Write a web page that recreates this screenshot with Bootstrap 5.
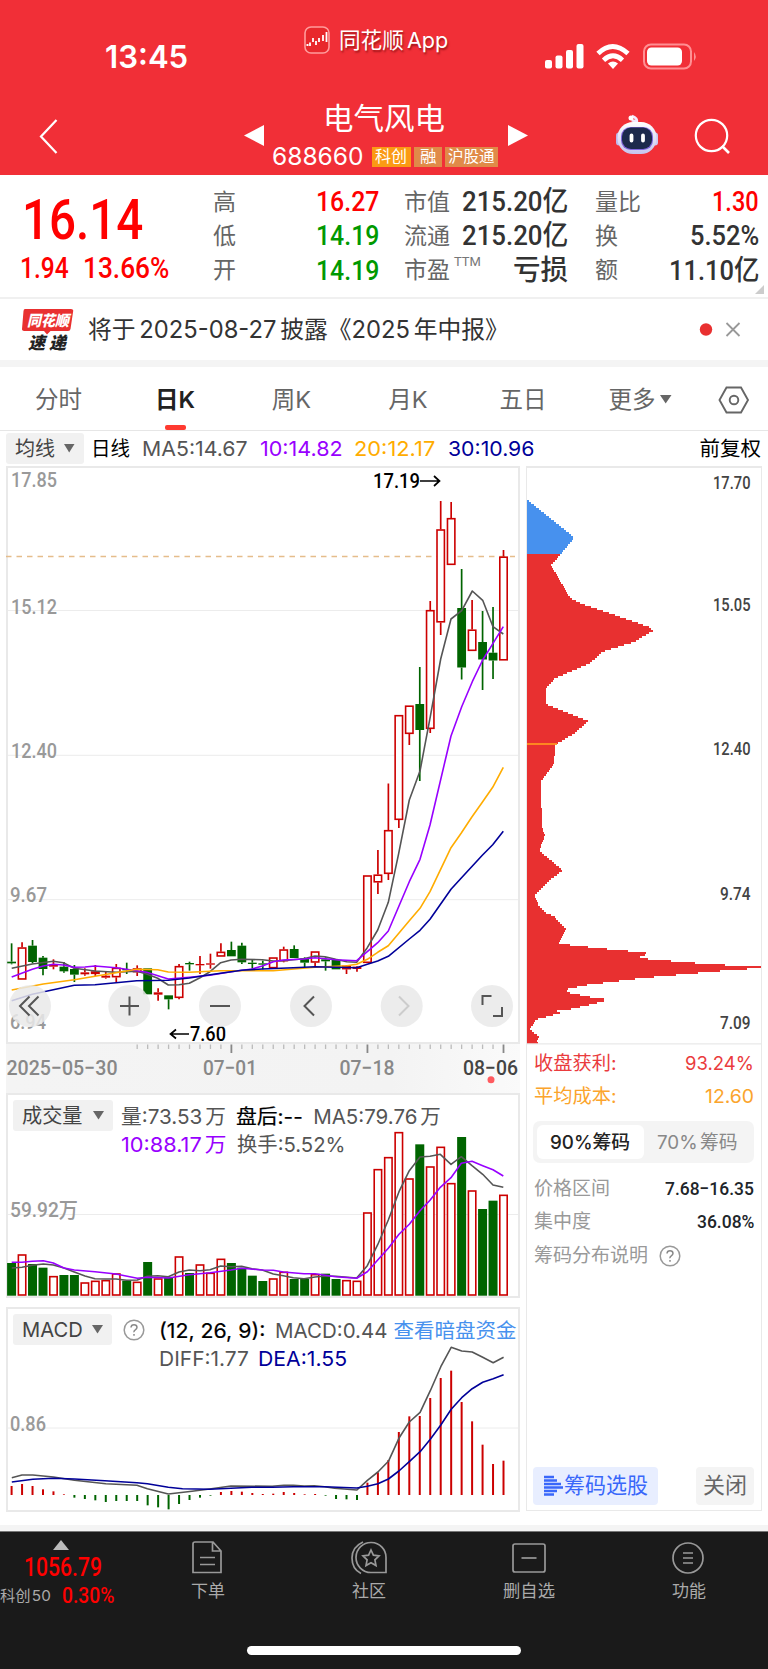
<!DOCTYPE html>
<html lang="zh-CN">
<head>
<meta charset="utf-8">
<meta name="viewport" content="width=device-width, initial-scale=1">
<title>电气风电 688660</title>
<link rel="stylesheet" href="https://cdn.jsdelivr.net/npm/bootstrap@5.3.0/dist/css/bootstrap.min.css">
<style>
:root{--up:#f00;--down:#090;--ink:#333;--sub:#666}
body{width:768px;height:1669px;overflow:hidden;background:#fff;color:var(--ink);font-family:Inter,"Noto Sans CJK SC",sans-serif;font-size:20px;line-height:1}
span[data-w]{display:inline-block;white-space:nowrap;transform-origin:0 50%}
.din{font-family:Roboto,"Noto Sans CJK SC",sans-serif;font-weight:500}
.up{color:var(--up)}.down{color:var(--down)}
.tight{word-spacing:-3px}
.semi{-webkit-text-stroke:.2px currentColor}
svg text{font-family:Roboto,"Noto Sans CJK SC",sans-serif;font-weight:500}
.top-area{height:175px;background:#f12f37;color:#fff}
.statusbar{height:90px;display:grid;grid-template-columns:105px 199px 241px 160px}
.clock{font-size:31.5px;font-weight:600;padding-top:41px}
.back-app{padding-top:25px;gap:9px;font-size:22px;height:54px;text-shadow:1px 2px 2px rgba(90,0,0,.55)}
.signals{padding-top:43px}
.titlebar{height:85px;display:grid;grid-template-columns:39px 205px 20px 244px 20px 88px 42px 36px 36px}
.titlebar svg{display:block}
.stock-title{font-size:30px;height:43px;margin:6px 5px 8px 0}
.code-row{height:20px;gap:3px;margin-left:8px;font-size:24px}
.mark-tag{height:20px;background:#e08a48;font-size:15.5px;line-height:20px;text-align:center;padding:0 3px}
.mark-tag.gold{background:#fb9a14;margin-left:6px}
.mark-tag.wide{padding:0 6px}
.quote{height:124px;border-bottom:2px solid #f0f0f0;display:grid;grid-template-columns:213px 166px 25px 164px 27px 164px;position:relative}
.price{font-size:55px;margin:15px 0 0 22px;height:60px;line-height:60px}
.chg{font-size:29px;margin-left:20px;height:36px;line-height:36px;gap:14px}
.qcol{padding-top:10px;font-size:28px}
.qcol>div{height:34.3px;display:flex;justify-content:space-between;align-items:center}
.qcol i{font-style:normal;font-size:23px;color:var(--sub);font-weight:400}
.qcol sup{font-size:13px;color:#777;position:relative;top:-12px;left:4px}
.fold{position:absolute;right:4px;bottom:3px}
.news{height:61px;padding-left:22px;font-size:24px;gap:14px}
.band{height:7px;background:#f4f4f4}
.tabs-k{height:64px;border-bottom:1px solid #e6e6e6;display:grid;grid-template-columns:117px 116px 117px 116px 114px 120px 1fr;align-items:center;color:var(--sub);font-size:23.5px;text-align:center;padding-top:2px}
.tabs-k .on{color:#222;font-weight:600;position:relative}
.tabs-k .on::after{content:"";position:absolute;left:48px;top:37px;width:21px;height:5px;border-radius:2px;background:#ff3a30}
.ma-row{height:35px;padding:0 7px 0 6px;font-size:20.5px}
.ma-row>span{padding-top:2px}
.picker{background:#f1f1f1;border-radius:3px;height:31px;padding:0 9px;color:#444}
.picker span{padding-top:1px}
.c5{color:#555}.c10{color:#9800ff}.c20{color:#ffac00}.c30{color:#000099}
.charts{display:grid;grid-template-columns:514px 236px;gap:6px;padding-left:6px;height:1059px}
.sub-panel{position:relative;height:205px}
.sub-panel>svg{position:absolute;left:0;top:0}
.legend{position:relative;padding:7px 0 0 7px;font-size:20.5px}
.legend .line{height:31px}
.legend .line>span{padding-top:3px}
.legend .line2{height:28px}
.chip{border:1px solid #e9e9e9;height:1045px;border-top-width:2px}
.chip>svg{margin:-2px 0 0 -1px}
.chip-row{padding:0 7px 0 7px;font-size:19px;color:#999}
.seg{height:42px;margin:8px 7px 8px 6px;padding:4px;border-radius:7px;background:#f4f4f4;font-size:19px;color:#888}
.seg>div{height:34px;width:107px;border-radius:6px}
.seg .on{background:#fff;color:#222;font-weight:500}
.act{height:38px;border-radius:4px;font-size:21.5px}
.footer-bar{height:138px;background:#1a1a1a;border-top:1px solid #777;color:#aaa}
.foot-grid{height:75px;display:grid;grid-template-columns:124px 168px 154px 166px 154px}
.foot-item{padding-top:9px;font-size:17px;gap:8px}
.index-val{font-size:26px;line-height:30px;height:30px;margin:2px 0 0 24px}
.home{width:274px;height:9px;border-radius:5px;background:#fff;margin:39px 0 0 247px}
</style>
</head>
<body>
<header class="top-area">
  <div class="statusbar">
    <div></div>
    <div class="clock"><span data-w="83">13:45</span></div>
    <div class="back-app d-flex align-items-center">
      <svg width="26" height="28" viewBox="0 0 26 28"><rect x="1" y="1" width="24" height="26" rx="6" fill="#e8282c" stroke="#ff9c9c" stroke-width="1.6"/><path d="M2.500 19h2M6 20v-3.500M9 16v-4M12 19v-4M15 16v-4M19 15V9M22.500 16V6" stroke="#fff" stroke-width="1.800" fill="none"/></svg>
      <span class="tight" data-w="109">同花顺 App</span>
    </div>
    <div class="signals"><svg class="d-block" width="154" height="28" viewBox="0 0 154 28">
      <g fill="#fff"><rect x="0" y="17" width="7" height="8.500" rx="2"/><rect x="10.500" y="12.500" width="7" height="13" rx="2"/><rect x="21" y="7" width="7" height="18.500" rx="2"/><rect x="31.500" y="1" width="7" height="24.500" rx="2"/></g>
      <g fill="none" stroke="#fff" stroke-width="4.800"><path d="M53 10.500Q67.500-3.500 83 10.500"/><path d="M58.500 17.200Q68 8.500 77.500 17.200"/></g><path d="M63 20.500Q68 16.500 73 20.500L68 26z" fill="#fff"/>
      <rect x="99" y="1.500" width="47" height="24" rx="7" fill="none" stroke="#ff8f93" stroke-width="2"/><rect x="102" y="4.500" width="35" height="18" rx="4.500" fill="#fff"/><path d="M149 9q3.500 4.500 0 9z" fill="#ff8f93"/></svg></div>
  </div>
  <div class="titlebar">
    <div></div>
    <svg width="22" height="70" viewBox="0 0 22 70"><path d="M17.500 30L2 46.500 17.500 63" fill="none" stroke="#fff" stroke-width="2.200"/></svg>
    <svg width="20" height="60" viewBox="0 0 20 60"><path d="M0 45.500L20 35v21z" fill="#fff"/></svg>
    <div>
      <div class="stock-title d-flex align-items-center justify-content-center"><span data-w="122">电气风电</span></div>
      <div class="code-row d-flex align-items-center"><span data-w="91">688660</span>
        <div class="mark-tag gold"><span data-w="32">科创</span></div><div class="mark-tag wide"><span data-w="17">融</span></div><div class="mark-tag"><span data-w="47">沪股通</span></div></div>
    </div>
    <svg width="20" height="60" viewBox="0 0 20 60"><path d="M20 45.500L0 35v21z" fill="#fff"/></svg>
    <div></div>
    <svg width="42" height="70" viewBox="0 0 42 70"><defs><linearGradient id="rb" x2="0" y2="1"><stop stop-color="#fff"/><stop offset="1" stop-color="#c6c4ee"/></linearGradient></defs><path d="M15.500 33.500q6 0 5.500 3V36q1-5-5-7" transform="translate(0,-3)" fill="none" stroke="#f3eaff" stroke-width="2.400"/><circle cx="15" cy="28" r="2.500" fill="#fff"/><rect x="0" y="42.500" width="6" height="13" rx="3" fill="#bdb9ec"/><rect x="36" y="42.500" width="6" height="13" rx="3" fill="#cdc9f2"/><rect x="1.500" y="32" width="39" height="32" rx="15.500" fill="url(#rb)"/><rect x="5" y="37" width="32" height="23" rx="9.500" fill="#8066dc"/><rect x="6" y="37.500" width="30" height="21.500" rx="9" fill="#1d2a4c"/><path d="M15.500 45.500v5M27 45.500v5" stroke="#fff" stroke-width="3.800" stroke-linecap="round"/></svg>
    <div></div>
    <svg width="38" height="70" viewBox="0 0 38 70"><circle cx="17.500" cy="45.500" r="15.700" fill="none" stroke="#fff" stroke-width="2.200"/><path d="M28 56L35 63" stroke="#fff" stroke-width="2.600"/></svg>
  </div>
</header>

<section class="quote">
  <div><div class="price din up"><span data-w="121">16.14</span></div>
    <div class="chg din up d-flex"><span data-w="49">1.94</span><span data-w="86">13.66%</span></div></div>
  <div class="qcol din"><div><i>高</i><span class="up" data-w="63">16.27</span></div><div><i>低</i><span class="down" data-w="63">14.19</span></div><div><i>开</i><span class="down" data-w="63">14.19</span></div></div>
  <div></div>
  <div class="qcol din"><div><i>市值</i><span data-w="106">215.20亿</span></div><div><i>流通</i><span data-w="106">215.20亿</span></div><div><i>市盈<sup>TTM</sup></i><span data-w="55">亏损</span></div></div>
  <div></div>
  <div class="qcol din"><div><i>量比</i><span class="up" data-w="47">1.30</span></div><div><i>换</i><span data-w="69">5.52%</span></div><div><i>额</i><span data-w="90">11.10亿</span></div></div>
  <svg class="fold" width="9" height="9"><path d="M9 0v9H0z" fill="#ccc"/></svg>
</section>

<section class="news d-flex align-items-center">
  <svg width="52" height="44" viewBox="0 0 52 44"><path d="M3 1h46q2.500 0 2.200 2l-2.700 18q-.3 2-2.500 2H28.500l-3.500 3.500L22 23H2Q-.2 23 0 21L1.500 3Q1.700 1 3 1z" fill="#e93030"/><g style="font-style:italic"><text x="5" y="18" font-size="15" fill="#fff" textLength="42" lengthAdjust="spacingAndGlyphs" style="font-weight:900">同花顺</text><text x="6" y="41" font-size="17" fill="#222" textLength="38" style="font-weight:900">速递</text></g></svg>
  <span class="tight" data-w="421">将于 2025-08-27 披露《2025 年中报》</span>
  <svg class="ms-auto" width="70" height="20" viewBox="0 0 70 20"><circle cx="8" cy="9.500" r="6.200" fill="#e93030"/><path d="M28.500 3L41.500 16M41.500 3L28.500 16" stroke="#999" stroke-width="1.800"/></svg>
</section>
<div class="band"></div>

<nav class="tabs-k">
  <div>分时</div><div class="on">日K</div><div>周K</div><div>月K</div><div>五日</div>
  <div class="d-flex align-items-center justify-content-center"><span>更多</span><svg class="ms-1" width="12" height="9"><path d="M0 0h11.500L5.700 8.500z" fill="#666"/></svg></div>
  <div class="d-flex ps-3"><svg width="34" height="28" viewBox="-2 0 34 28"><path d="M8.500 1.500h14.500L30 14l-7 12.500H8.500L1.500 14z" fill="none" stroke="#666" stroke-width="1.900"/><circle cx="16" cy="14" r="4.300" fill="none" stroke="#666" stroke-width="1.900"/></svg></div>
</nav>

<div class="ma-row d-flex align-items-center">
  <div class="picker d-flex align-items-center"><span data-w="40">均线</span><svg style="margin-left:9px" width="11" height="9"><path d="M0 0h10.500L5.200 8.500z" fill="#666"/></svg></div>
  <span class="text-black" data-w="39" style="margin-left:7px">日线</span>
  <span class="c5" data-w="106" style="margin-left:12px">MA5:14.67</span>
  <span class="c10" data-w="83" style="margin-left:12px">10:14.82</span>
  <span class="c20" data-w="81" style="margin-left:12px">20:12.17</span>
  <span class="c30" data-w="86" style="margin-left:12px">30:10.96</span>
  <span class="text-black ms-auto" data-w="62">前复权</span>
</div>

<main class="charts">
  <div>
    <svg class="d-block" id="kline" width="514" height="578" viewBox="6 466 514 578"></svg>
    <svg class="d-block" id="axis" width="514" height="49" viewBox="6 1044 514 49"></svg>
    <div class="sub-panel" style="margin-bottom:9px"><svg id="vol" width="514" height="205" viewBox="6 1093 514 205"></svg>
      <div class="legend">
        <div class="line d-flex align-items-center"><div class="picker d-flex align-items-center"><span data-w="61">成交量</span><svg style="margin-left:10px" width="11" height="9"><path d="M0 0h11L5.500 8.500z" fill="#666"/></svg></div>
          <span class="c5 tight" style="margin-left:8px" data-w="105">量:73.53 万</span><span class="text-black semi" style="margin-left:11px" data-w="67">盘后:--</span><span class="c5 tight" style="margin-left:10px" data-w="128">MA5:79.76 万</span></div>
        <div class="line2 d-flex align-items-center" style="padding-left:108px"><span class="c10 tight" data-w="105">10:88.17 万</span><span class="c5" style="margin-left:11px" data-w="109">换手:5.52%</span></div>
      </div>
    </div>
    <div class="sub-panel"><svg id="macd" width="514" height="205" viewBox="6 1307 514 205"></svg>
      <div class="legend">
        <div class="line d-flex align-items-center"><div class="picker d-flex align-items-center"><span data-w="61">MACD</span><svg style="margin-left:9px" width="11" height="9"><path d="M0 0h11L5.500 8.500z" fill="#666"/></svg></div>
          <svg style="margin-left:11px" width="22" height="22" viewBox="0 0 22 22"><circle cx="11" cy="11" r="9.800" fill="none" stroke="#999" stroke-width="1.500"/><path d="M8 8.500q.2-2.800 3-2.800t3 2.600q0 1.500-1.700 2.500T11 13.300M11 15v1.700" fill="none" stroke="#888" stroke-width="1.500"/></svg>
          <span class="text-black semi" style="margin-left:14px" data-w="106">(12, 26, 9):</span><span class="c5" style="margin-left:10px" data-w="112">MACD:0.44</span><span style="margin-left:6px;color:#4791ee" data-w="123">查看暗盘资金</span></div>
        <div class="line2 d-flex align-items-center" style="padding-left:146px"><span class="c5" data-w="90">DIFF:1.77</span><span class="c30" style="margin-left:9px" data-w="89">DEA:1.55</span></div>
      </div>
    </div>
  </div>

  <aside class="chip d-flex flex-column">
    <svg class="d-block flex-shrink-0" id="dist" width="236" height="579" viewBox="526 466 236 579"></svg>
    <div class="chip-row d-flex justify-content-between align-items-center" style="height:34px;margin-top:1px;color:#ea3b3d"><span data-w="82">收盘获利:</span><span data-w="69">93.24%</span></div>
    <div class="chip-row d-flex justify-content-between align-items-center" style="height:33px;color:#fba42c"><span data-w="82">平均成本:</span><span data-w="49">12.60</span></div>
    <div class="seg d-flex"><div class="on d-flex align-items-center justify-content-center"><span data-w="80">90%筹码</span></div><div class="d-flex align-items-center justify-content-center"><span class="tight" data-w="80">70% 筹码</span></div></div>
    <div class="chip-row d-flex justify-content-between align-items-center" style="height:34px"><span data-w="76">价格区间</span><span class="din text-dark" data-w="89">7.68−16.35</span></div>
    <div class="chip-row d-flex justify-content-between align-items-center" style="height:33px"><span data-w="57">集中度</span><span class="din text-dark" data-w="57">36.08%</span></div>
    <div class="chip-row d-flex align-items-center" style="height:35px"><span data-w="114">筹码分布说明</span><svg style="margin-left:11px" width="22" height="22" viewBox="0 0 22 22"><circle cx="11" cy="11" r="9.800" fill="none" stroke="#999" stroke-width="1.500"/><path d="M8 8.500q.2-2.800 3-2.800t3 2.600q0 1.500-1.700 2.500T11 13.300M11 15v1.700" fill="none" stroke="#888" stroke-width="1.500"/></svg></div>
    <div class="d-flex justify-content-between mt-auto" style="padding:0 7px 5px 6px">
      <div class="act d-flex align-items-center" style="background:#e8eeff;color:#3967fa;padding:0 10px"><svg width="21" height="22" viewBox="0 0 21 22"><path d="M1 2h10M1 5.500h13M1 9h17M1 12.500h19M1 16h13M1 19.500h10" stroke="#3967fa" stroke-width="2.300"/></svg><span data-w="84">筹码选股</span></div>
      <div class="act d-flex align-items-center" style="background:#f4f4f4;color:#666;padding:0 7px"><span data-w="44">关闭</span></div>
    </div>
  </aside>
</main>
<div class="band" style="height:6px"></div>

<footer class="footer-bar">
  <div class="foot-grid">
    <div><svg class="d-block" style="margin:8px 0 0 53px" width="16" height="10"><path d="M8 0l8 10H0z" fill="#bbb"/></svg>
      <div class="din up index-val"><span data-w="78">1056.79</span></div>
      <div class="d-flex align-items-center" style="height:27px;font-size:15px"><span class="tight" data-w="51">科创 50</span><span class="din up" style="font-size:21.500px;margin-left:11px" data-w="52">0.30%</span></div></div>
    <div class="foot-item d-flex flex-column align-items-center"><svg width="32" height="34" viewBox="0 0 32 34"><path d="M3 1h18l8 9v21.500H1V3q0-2 2-2zM20.500 1.500V10H29M8 16.500h15M8 23.500h15" fill="none" stroke="#999" stroke-width="1.700"/></svg><span data-w="34">下单</span></div>
    <div class="foot-item d-flex flex-column align-items-center"><svg width="36" height="34" viewBox="0 0 36 34"><path d="M12 1Q1 6 1 17t9 15.500M20 31.500h15V17A15 15 0 1 0 20 31.500" fill="none" stroke="#999" stroke-width="1.700"/><path d="M20 9l2.400 5.200 5.600.7-4.100 3.900 1.100 5.700-5-2.800-5 2.800 1.100-5.700-4.100-3.900 5.600-.7z" fill="none" stroke="#999" stroke-width="1.700"/></svg><span data-w="34">社区</span></div>
    <div class="foot-item d-flex flex-column align-items-center"><svg width="34" height="34" viewBox="0 0 34 34"><rect x="1" y="3" width="32" height="28" rx="2" fill="none" stroke="#999" stroke-width="1.700"/><path d="M9.500 17h15" stroke="#999" stroke-width="1.700"/></svg><span data-w="52">删自选</span></div>
    <div class="foot-item d-flex flex-column align-items-center"><svg width="34" height="34" viewBox="0 0 34 34"><circle cx="16" cy="17" r="15" fill="none" stroke="#999" stroke-width="1.700"/><path d="M11 12h10M11 17h10M11 22h10" stroke="#999" stroke-width="1.700"/></svg><span data-w="34">功能</span></div>
  </div>
  <div class="home"></div>
</footer>

<script src="https://cdn.jsdelivr.net/npm/bootstrap@5.3.0/dist/js/bootstrap.bundle.min.js"></script>
<script>
const RED='#cc0000',GREEN='#006400';
const X=i=>11.6+10.466*i;
const $=id=>document.getElementById(id);
const rect=(x,y,w,h,a)=>`<rect x="${x}" y="${y}" width="${w}" height="${h}" ${a}/>`;
const line=(x1,y1,x2,y2,c,w=1.5)=>`<path d="M${x1} ${y1}L${x2} ${y2}" stroke="${c}" stroke-width="${w}"/>`;
const label=(x,y,s,w,c,f=21)=>`<text x="${x}" y="${y}" font-size="${f}" fill="${c}" textLength="${w}" lengthAdjust="spacingAndGlyphs">${s}</text>`;
// "x,y x,y ..." in thirds of a pixel, shifted by the chart origin
const curve=(s,c,ox,oy,kx=3)=>`<polyline fill="none" stroke="${c}" stroke-width="1.600" stroke-linejoin="round" points="${s.trim().split(/\s+/).map(p=>{const[a,b]=p.split(',');return (ox+a/kx).toFixed(1)+','+(oy+b/3).toFixed(1)}).join(' ')}"/>`;
const frame=(y,h)=>rect(7,y+1,512,h-2,'fill="#fff" stroke="#e9e9e9" stroke-width="2"');

// daily candles: up/down, body top, body bottom, high, low
const early=`g185,190,130,193 r142,239,127,239 g137,186,120,190 g173,207,168,226 r194,200,178,208 g200,214,186,218 g207,224,195,246 r217,223,205,227 r214,222,195,228 r227,233,213,236 r203,232,192,246 g207,211,188,222 r205,217,196,228 g205,283,205,283 r277,284,265,302 g286,298,286,328 r198,294,192,298 g189,193,185,212 r192,196,168,222 r190,194,161,206 r155,170,130,170 g150,169,125,169 g137,187,128,192 g188,192,178,206 g190,194,182,208 r172,205,172,205 r148,184,140,187 g147,174,136,174 g175,188,172,202 r154,188,154,198 g178,184,172,212 g180,208,180,208 r197,208,195,222 r200,207,198,215`
 .split(' ').map(s=>[s[0],...s.slice(1).split(',').map(v=>900+v/3)]);
const late=[['r',875.3,963,875.3,963],['r',874.5,882.5,850,894],['r',830,874,783.5,880],['r',715,820,715,828],['r',705.5,734,705.5,745],['g',704,730,667,781],['r',610,729,601,733],['r',529.3,622.5,501,635],['r',518,565,502,565],['g',608,667.5,569,679.5],['r',629.5,651,600,651],['g',642,659.5,611,690],['g',652.7,660.5,607,679],['r',556.5,660.5,550,660.5]];
let k=frame(466,578);
[610.5,755.300,899.700].forEach(y=>k+=line(8,y,518,y,'#ececec',1));
k+='<path d="M6 556.500H515" stroke="#e5bd8b" stroke-width="1.300" stroke-dasharray="5.500 5"/>';
[...early,...late].forEach(([t,a,b,h,l],i)=>{const x=X(i),c=t=='r'?RED:GREEN;
 k+=line(x,h,x,a,c,1.7)+line(x,b,x,l,c,1.7);
 k+=t=='g'||b-a<2.5?rect(x-4.4,a,8.8,Math.max(b-a,1.3),`fill="${c}"`):rect(x-3.7,a+.7,7.4,b-a-1.4,`fill="#fff" stroke="${c}" stroke-width="1.600"`)});
k+=curve('35,205 97,192 160,184 190,188 223,205 285,213 348,217 410,214 440,222 473,235 505,255 537,254 568,250 600,233 630,215 662,188 693,180 725,178 787,179 820,183 850,182 880,179 912,176 945,168 975,170 1007,178 1040,185 1070,187 1102,143 1133,90 1165,7 1196,-140 1228,-300 1260,-387 1291,-550 1322,-723 1353,-843 1385,-868 1417,-927 1448,-899 1479,-820 1510,-798','#555',0,900);
k+=curve('35,231 97,208 130,198 160,193 190,195 223,202 255,201 285,198 348,203 410,212 440,217 505,237 568,232 630,226 693,215 756,207 787,198 820,185 850,180 912,177 945,173 1007,179 1070,182 1102,155 1133,128 1165,93 1228,-55 1260,-122 1290,-225 1336,-420 1353,-492 1385,-580 1417,-655 1448,-720 1479,-770 1510,-820','#9800ff',0,900);
k+=curve('35,270 130,252 223,239 285,229 348,218 410,208 473,209 505,216 568,217 662,212 820,212 945,202 1040,197 1070,193 1102,178 1133,157 1165,137 1228,62 1260,25 1290,-25 1353,-157 1384,-201 1415,-248 1447,-293 1478,-338 1510,-398','#ffac00',0,900);
k+=curve('35,302 97,283 160,269 223,256 285,254 348,248 410,242 505,241 568,234 630,224 725,211 787,207 880,203 945,200 1070,203 1102,193 1133,183 1165,169 1228,117 1260,91 1290,58 1353,-32 1384,-66 1447,-134 1478,-166 1510,-206','#000099',0,900);
k+=label(11,487,'17.85',46,'#999')+label(11,613.5,'15.12',46,'#999')+label(11,758,'12.40',46,'#999')+label(10,902,'9.67',37,'#999')+label(10,1029,'6.94',36,'#999');
k+=label(373,488,'17.19',47,'#000')+label(190,1040.5,'7.60',36,'#000',20.5);
k+='<path d="M420 481h19M434 476l5.500 5-5.500 5M189 1034h-18M176 1029.500l-5.500 4.500 5.500 4.500" fill="none" stroke="#000" stroke-width="1.700"/>';
[30,129.3,220,311,401.700,492].forEach(x=>k+=`<circle cx="${x}" cy="1006" r="21" fill="#e9e9e9" fill-opacity=".85"/>`);
k+='<g fill="none" stroke="#555" stroke-width="2"><path d="M29.500 996.500L20 1006l9.500 9.500M38.500 996.500L29 1006l9.500 9.500M120 1006h19M129.500 996.500v19M210 1006h20M314 996.500l-9.500 9.500 9.500 9.500M482.500 1005v-9h9M502 1007v9h-9"/><path d="M399 996.500l9.500 9.500-9.500 9.500" stroke="#ccc"/></g>';
$('kline').innerHTML=k;

let ax='<defs><linearGradient id="g"><stop stop-color="#f4f4f4"/><stop offset=".75" stop-color="#f3f3f3"/><stop offset="1" stop-color="#fafafa"/></linearGradient></defs>'+rect(6,1044,514,49,'fill="url(#g)"');
for(let i=12;i<48;i++){const m=[21,34,47].includes(i);ax+=line(X(i),1044.5,X(i),m?1053:1049,m?'#888':'#bbb',m?1.8:1.3)}
ax+=label(6.5,1075,'2025−05−30',111,'#888')+label(203,1075,'07−01',54,'#888')+label(339.5,1075,'07−18',55,'#888')+label(463,1075,'08−06',55,'#444');
ax+='<circle cx="491" cy="1079.700" r="3.500" fill="#ff5a5f"/>';
$('axis').innerHTML=ax;

const vols='g549 r525 g552 g563 r590 g585 g585 r609 r604 r602 r582 g602 r607 g546 r597 g592 r531 g579 r555 r580 r538 g549 g563 g587 g603 r597 r577 g597 g597 r584 g581 g597 r602 r604 r399 r269 r233 r158 r297 g193 r261 r202 r311 g171 r333 g387 g362 r346'.split(' ');
let v=frame(1093,205)+line(8,1214.5,518,1214.5,'#ececec',1);
vols.forEach((s,i)=>{const x=X(i),y=1080+s.slice(1)/3,b=1295.7;
 v+=s[0]=='g'?rect(x-4.5,y,9,b-y,`fill="${GREEN}"`):rect(x-3.7,y,7.4,b-y-.7,`fill="#fff" stroke="${RED}" stroke-width="1.600"`)});
v+=curve('35,564 66,562 97,556 130,552 160,555 192,564 223,576 255,588 285,596 317,597 348,597 380,601 412,600 442,589 473,587 505,590 537,576 568,570 600,572 630,569 662,558 693,560 725,559 756,566 787,570 820,582 850,587 880,593 912,596 945,591 975,588 1007,589 1070,594 1102,557 1133,494 1165,420 1197,335 1228,272 1260,231 1290,229 1321,223 1353,253 1384,230 1416,257 1448,283 1479,315 1510,322','#555',0,1080);
v+=curve('35,547 66,547 97,544 130,542 160,549 192,564 223,570 285,575 348,582 412,595 442,592 505,594 568,584 630,578 693,570 725,565 787,570 820,571 850,576 912,581 945,581 1007,590 1070,595 1102,575 1133,540 1165,505 1197,463 1228,433 1260,392 1290,361 1321,322 1353,293 1384,250 1416,244 1448,257 1479,269 1510,288','#9800ff',0,1080);
v+=label(10,1217,'59.92万',68,'#999');
$('vol').innerHTML=v;

const hist=[558,552,558,568,574,583,593,597,601,606,603,603,603,616,622,628,612,600,593,587,576,573,575,579,582,581,576,579,583,582,587,597,598,600,548,517,480,396,349,348,294,234,212,306,364,434,492,482];
let m=frame(1307,205)+line(8,1428,518,1428,'#ececec',1);
hist.forEach((p,i)=>{const y=1300+p/3;m+=line(X(i),1495,X(i),y,y<1495?RED:GREEN,2)});
m+=curve('35,533 65,525 97,525 158,531 220,541 313,551 405,556 436,566 498,582 568,574 620,567 683,558 805,559 840,556 868,556 900,558 930,557 960,560 990,565 1056,570 1087,541 1118,516 1149,484 1180,415 1211,366 1243,337 1273,272 1304,200 1335,142 1366,153 1397,156 1428,172 1459,188 1490,172','#555',0,1300,2.9585);
m+=curve('35,546 97,538 158,535 220,537 310,542 405,548 436,551 498,562 540,566 620,568 683,565 745,562 805,562 868,560 960,560 1056,564 1087,559 1118,551 1149,537 1180,513 1211,485 1243,455 1273,418 1304,375 1335,328 1366,293 1397,266 1428,247 1459,236 1490,224','#000099',0,1300,2.9585);
m+=label(10,1431,'0.86',36,'#999');
$('macd').innerHTML=m;

// cost distribution profile, rasterised into 2px price bins
const prof=[[527.5,500],[574.3,537.7],[564,550],[561,554],[551,565.3],[570,597.7],[581.7,604],[608,612.7],[648.3,626.7],[653,630.7],[633.3,642.3],[602.3,651.7],[590,663.3],[555,678.3],[545.7,689],[545.7,704.3],[588.3,721.3],[574.3,733.3],[555,745],[554.3,760],[554,764],[540.7,781.7],[542,826.7],[544.7,835.7],[539.3,850.7],[562.7,870.3],[550,880],[534.7,895],[538.7,905.7],[545,912.7],[553.3,915.7],[565.7,929],[559,943.3],[571.7,945.3],[600,948.3],[646,952.7],[644,956],[636.7,958],[690,962.7],[740,966],[760.7,968],[723.3,970.7],[643.3,978],[586.7,985],[566.7,989.3],[566.7,992.3],[591.7,997.3],[609,999.7],[591.7,1004.3],[573.3,1008.7],[556,1010.7],[560,1013.3],[536.7,1019.3],[529.3,1029.3],[539.3,1036.7],[536.7,1041],[539.3,1044]];
const at=y=>{for(let i=1;i<prof.length;i++)if(y<=prof[i][1]){const[a,b]=prof[i-1],[c,d]=prof[i];return a+(c-a)*(y-b)/(d-b)}return 539};
let d='';
for(let y=500;y<1044;y+=2)d+=rect(527,y,(at(y+(y==966?2:1))-527).toFixed(1),2,`fill="${y<554?'#4791ee':'#e83030'}" shape-rendering="crispEdges"`);
d+=line(527,744,557,744,'#ff9020',1.8)+line(526,1043.8,762,1043.8,'#e9e9e9',1.3);
[['17.70',489,37],['15.05',610.5,37],['12.40',755,37],['9.74',899.5,30],['7.09',1028.5,30]].forEach(([s,y,w])=>d+=label(750-w,y,s,w+.5,'#444',18));
$('dist').innerHTML=d;

// condense or widen each label to its slot width
document.querySelectorAll('span[data-w]').forEach(e=>{const w=+e.dataset.w,n=e.offsetWidth;e.style.transform=`scaleX(${w/n})`;e.style.marginRight=(w-n)+'px';e.style.flexShrink=0});
</script>
</body>
</html>
